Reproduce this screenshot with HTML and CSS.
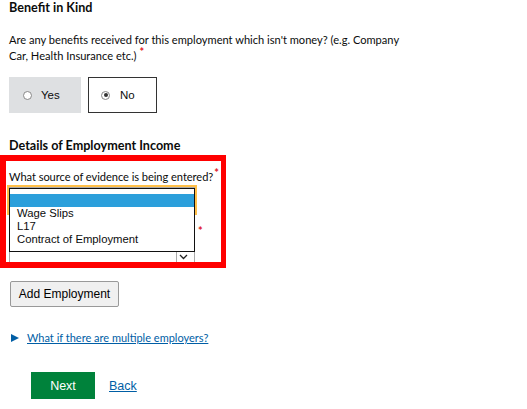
FILE: index.html
```html
<!DOCTYPE html>
<html>
<head>
<meta charset="utf-8">
<link rel="stylesheet" href="styles.css">
</head>
<body>
<main class="page">
  <h2 class="heading">Benefit in Kind</h2>
  <p class="question">Are any benefits received for this employment which isn't money? (e.g. Company Car, Health Insurance etc.)<span class="req">*</span></p>
  <div class="radios">
    <label class="radio">
      <span class="circle"></span>
      <span>Yes</span>
    </label>
    <label class="radio selected">
      <span class="circle checked"></span>
      <span>No</span>
    </label>
  </div>

  <h2 class="heading heading-2">Details of Employment Income</h2>
  <div class="highlight">
    <div class="field">
      <p class="label">What source of evidence is being entered?<span class="req req-1">*</span></p>
      <div class="select focus"></div>
      <div class="listbox">
        <div class="option active">&nbsp;</div>
        <div class="option">Wage Slips</div>
        <div class="option">L17</div>
        <div class="option">Contract of Employment</div>
      </div>
    </div>
    <div class="field field-2">
      <div class="label label-2"><span class="req req-2">*</span></div>
      <div class="select">
        <span class="arrow">
          <svg width="9" height="6" viewBox="0 0 9 6"><path d="M1 1 L4.5 4.5 L8 1" fill="none" stroke="#222" stroke-width="1.3"/></svg>
        </span>
      </div>
    </div>
  </div>

  <button class="btn-secondary">Add Employment</button>

  <div class="details">
    <span class="tri"></span>
    <a class="link" href="#">What if there are multiple employers?</a>
  </div>

  <div class="actions">
    <button class="btn-primary">Next</button>
    <a class="back" href="#">Back</a>
  </div>
</main>
</body>
</html>
```

FILE: styles.css
```css
* { box-sizing: border-box; }
html, body { margin: 0; padding: 0; background: #fff; }
body { font-family: Lato, "Liberation Sans", sans-serif; color: #0b0c0c; }
.page { padding: 0 0 0 9px; width: 527px; }
.heading { font-size: 12.6px; font-weight: 700; margin: 0; line-height: 16px; }
.question { font-size: 11.1px; line-height: 16px; margin: 16px 0 0; width: 400px; }
.req { color: #e0141e; font-size: 11px; font-weight: 700; position: relative; top: -4px; margin-left: 3px; line-height: 0; }
.radios { display: flex; gap: 7px; margin-top: 13px; }
.radio { display: flex; align-items: center; gap: 9px; height: 36px; background: #dee0e2; padding: 0 0 0 14px; font-family: "Liberation Sans", sans-serif; font-size: 11.5px; width: 72px; }
.radio.selected { background: #fff; border: 1px solid #333; width: 69px; padding-left: 12px; gap: 10px; }
.circle { width: 9px; height: 9px; border-radius: 50%; border: 1px solid #888; background: #fff; display: inline-block; position: relative; flex: none; }
.circle.checked::after { content: ""; position: absolute; left: 1.5px; top: 1.5px; width: 4px; height: 4px; border-radius: 50%; background: #333; }
.heading-2 { margin-top: 25px; }
.highlight { margin-left: -9px; margin-top: 1px; border: 6px solid #ff0000; border-right-width: 5px; width: 226px; height: 113px; padding: 0 0 0 3px; position: relative; overflow: hidden; }
.field { position: relative; }
.label { font-size: 11.1px; line-height: 16px; margin: 8px 0 0; white-space: nowrap; letter-spacing: -0.05px; }
.req-1 { margin-left: 1px; }
.select { width: 186px; height: 26px; border: 1px solid #aaa; margin-top: 2px; position: relative; background: #fff; }
.select.focus { box-shadow: 0 0 0 2px #ffbf47; }
.listbox { position: absolute; top: 19px; left: 0; width: 186px; height: 64px; border: 1px solid #111; background: #fff; padding: 5px 0; font-family: "Liberation Sans", sans-serif; font-size: 11.3px; z-index: 2; }
.option { height: 13px; line-height: 13px; padding-left: 7px; white-space: nowrap; }
.option.active { background: #2b9fdb; }
.field-2 .label { margin-top: 6px; height: 16px; }
.req-2 { margin-left: 189px; top: 4px; }
.arrow { position: absolute; right: 5px; top: 12px; width: 13px; height: 13px; border-left: 1px solid #aaa; display: flex; align-items: center; justify-content: center; }
.btn-secondary { display: block; margin-top: 13px; margin-left: 1px; width: 109px; height: 26px; background: #f0f0f0; border: 1px solid #999; border-radius: 2px; font-family: "Liberation Sans", sans-serif; font-size: 12px; color: #000; padding: 0; }
.details { display: flex; align-items: center; margin-top: 24px; margin-left: 2px; gap: 8px; font-size: 11px; }
.tri { width: 0; height: 0; border-top: 4.5px solid transparent; border-bottom: 4.5px solid transparent; border-left: 8px solid #005ea5; }
.link { color: #005ea5; text-decoration: underline; }
.actions { display: flex; align-items: center; gap: 14px; margin-top: 28px; margin-left: 22px; }
.btn-primary { width: 64px; height: 27px; background: #00823b; color: #fff; border: 0; box-shadow: 0 1px 0 #003618; font-family: "Liberation Sans", sans-serif; font-size: 12.5px; padding: 0; }
.back { color: #005ea5; text-decoration: underline; font-family: "Liberation Sans", sans-serif; font-size: 12.5px; }
```
